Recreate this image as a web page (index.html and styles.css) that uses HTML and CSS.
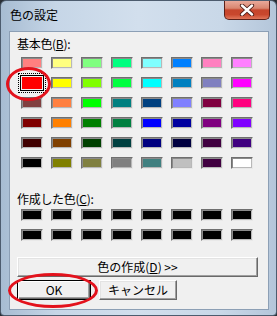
FILE: index.html
```html
<!DOCTYPE html>
<html lang="ja">
<head>
<meta charset="utf-8">
<title>色の設定</title>
<link rel="stylesheet" href="styles.css">
</head>
<body>
<div class="window">
  <div class="titlebar">
    <span class="title">色の設定</span>
    <div class="close">
      <svg width="16" height="12" viewBox="0 0 16 12">
        <path d="M3 1.5 L13 10.5 M13 1.5 L3 10.5" stroke="#4a1a14" stroke-width="4.2" stroke-linecap="round"/>
        <path d="M3 1.5 L13 10.5 M13 1.5 L3 10.5" stroke="#ffffff" stroke-width="2.4" stroke-linecap="round"/>
      </svg>
    </div>
  </div>
  <div class="client">
    <div class="label">基本色(<u>B</u>):</div>
    <div class="grid">
      <span class="sw" style="background:#ff8080"></span>
      <span class="sw" style="background:#ffff80"></span>
      <span class="sw" style="background:#80ff80"></span>
      <span class="sw" style="background:#00ff80"></span>
      <span class="sw" style="background:#80ffff"></span>
      <span class="sw" style="background:#0080ff"></span>
      <span class="sw" style="background:#ff80c0"></span>
      <span class="sw" style="background:#ff80ff"></span>

      <span class="sw selected" style="background:#ff0000"></span>
      <span class="sw" style="background:#ffff00"></span>
      <span class="sw" style="background:#80ff00"></span>
      <span class="sw" style="background:#00ff40"></span>
      <span class="sw" style="background:#00ffff"></span>
      <span class="sw" style="background:#0080c0"></span>
      <span class="sw" style="background:#8080c0"></span>
      <span class="sw" style="background:#ff00ff"></span>

      <span class="sw" style="background:#804040"></span>
      <span class="sw" style="background:#ff8040"></span>
      <span class="sw" style="background:#00ff00"></span>
      <span class="sw" style="background:#008080"></span>
      <span class="sw" style="background:#004080"></span>
      <span class="sw" style="background:#8080ff"></span>
      <span class="sw" style="background:#800040"></span>
      <span class="sw" style="background:#ff0080"></span>

      <span class="sw" style="background:#800000"></span>
      <span class="sw" style="background:#ff8000"></span>
      <span class="sw" style="background:#008000"></span>
      <span class="sw" style="background:#008040"></span>
      <span class="sw" style="background:#0000ff"></span>
      <span class="sw" style="background:#0000a0"></span>
      <span class="sw" style="background:#800080"></span>
      <span class="sw" style="background:#8000ff"></span>

      <span class="sw" style="background:#400000"></span>
      <span class="sw" style="background:#804000"></span>
      <span class="sw" style="background:#004000"></span>
      <span class="sw" style="background:#004040"></span>
      <span class="sw" style="background:#000080"></span>
      <span class="sw" style="background:#000040"></span>
      <span class="sw" style="background:#400040"></span>
      <span class="sw" style="background:#400080"></span>

      <span class="sw" style="background:#000000"></span>
      <span class="sw" style="background:#808000"></span>
      <span class="sw" style="background:#808040"></span>
      <span class="sw" style="background:#808080"></span>
      <span class="sw" style="background:#408080"></span>
      <span class="sw" style="background:#c0c0c0"></span>
      <span class="sw" style="background:#400040"></span>
      <span class="sw" style="background:#ffffff"></span>
    </div>
    <div class="label custom-label">作成した色(<u>C</u>):</div>
    <div class="grid custom">
      <span class="sw black"></span><span class="sw black"></span><span class="sw black"></span><span class="sw black"></span>
      <span class="sw black"></span><span class="sw black"></span><span class="sw black"></span><span class="sw black"></span>
      <span class="sw black"></span><span class="sw black"></span><span class="sw black"></span><span class="sw black"></span>
      <span class="sw black"></span><span class="sw black"></span><span class="sw black"></span><span class="sw black"></span>
    </div>
    <button class="btn define">色の作成(<u>D</u>) &gt;&gt;</button>
    <div class="btnrow">
      <button class="btn ok">OK</button>
      <button class="btn cancel">キャンセル</button>
    </div>
  </div>
  <div class="ring ring-swatch"></div>
  <div class="ring ring-ok"></div>
</div>
</body>
</html>
```

FILE: styles.css
```css
html, body {
  margin: 0;
  padding: 0;
  background: #2a2f36;
}
body {
  width: 277px;
  height: 316px;
  overflow: hidden;
  font-family: "Noto Sans CJK JP", "DejaVu Sans", sans-serif;
  font-size: 12px;
  color: #000;
}
.window {
  position: relative;
  width: 277px;
  height: 316px;
  box-sizing: border-box;
  border: 1px solid #4d5c6e;
  border-radius: 6px 6px 4px 4px;
  background: linear-gradient(to right, #a7bcd2 0%, #c6d6e7 20%, #d2dfed 50%, #c9d8e8 80%, #b4c6da 100%);
  display: flex;
  flex-direction: column;
  padding: 0 7px 5px 8px;
}
.titlebar {
  height: 30px;
  display: flex;
  align-items: flex-start;
  justify-content: space-between;
  flex: none;
}
.title {
  margin-top: 6px;
  margin-left: 1px;
  font-size: 12px;
  line-height: 16px;
  color: #000;
}
.close {
  width: 46px;
  height: 19px;
  margin-right: -1px;
  box-sizing: border-box;
  border: 1px solid #5b2019;
  border-top: none;
  border-radius: 0 0 5px 5px;
  background: linear-gradient(to bottom, #e9a99a 0%, #d98670 40%, #c6452c 50%, #c9472d 75%, #e0765a 100%);
  display: flex;
  align-items: center;
  justify-content: center;
}
.close svg {
  display: block;
}
.client {
  flex: 1;
  background: #f0f0f0;
  border: 1px solid #8c9fb5;
  display: flex;
  flex-direction: column;
  padding: 0 0 0 7px;
}
.label {
  margin-top: 5px;
  line-height: 14px;
  height: 14px;
  font-size: 12px;
  letter-spacing: -0.3px;
}
.label u, .btn u {
  text-decoration: underline;
  text-underline-offset: 1px;
}
.grid {
  display: grid;
  grid-template-columns: repeat(8, 22px);
  grid-auto-rows: 12px;
  column-gap: 8px;
  row-gap: 8px;
  margin-top: 6px;
  margin-left: 4px;
}
.sw {
  display: block;
  box-sizing: border-box;
  border: 1px solid;
  border-color: #6f6f6f #e8e8e8 #e8e8e8 #6f6f6f;
  box-shadow: inset 1px 1px 0 #8a8a8a, inset -1px -1px 0 #b8b8b8;
}
.sw.black {
  background: #000;
}
.sw.selected {
  border: 1px solid #000;
  box-shadow: inset 0 0 0 1px #f0f0f0;
  outline: 1px dotted #000;
  outline-offset: 1px;
  margin: -2px -1px;
}
.custom-label {
  margin-top: 23px;
}
.custom {
  margin-top: 3px;
}
.btn {
  font-family: "Noto Sans CJK JP", "DejaVu Sans", sans-serif;
  font-size: 12px;
  line-height: 16px;
  height: 20px;
  padding: 0;
  box-sizing: border-box;
  background: #f0f0f0;
  color: #000;
  border: 1px solid;
  border-color: #ffffff #696969 #696969 #ffffff;
  box-shadow: inset -1px -1px 0 #a0a0a0, inset 1px 1px 0 #e3e3e3;
  display: flex;
  align-items: center;
  justify-content: center;
}
.define {
  width: 241px;
  margin-top: 16px;
}
.btnrow {
  display: flex;
  gap: 8px;
  margin-top: 3px;
}
.ok {
  width: 74px;
  border: 1px solid #000;
  box-shadow: inset 1px 1px 0 #ffffff, inset -1px -1px 0 #696969, inset -2px -2px 0 #a0a0a0;
}
.cancel {
  width: 78px;
}
.ring {
  position: absolute;
  box-sizing: border-box;
  border: 3px solid #e3121c;
  border-radius: 50%;
}
.ring-swatch {
  left: 5px;
  top: 66px;
  width: 45px;
  height: 34px;
}
.ring-ok {
  left: 7px;
  top: 272px;
  width: 90px;
  height: 35px;
}
```
